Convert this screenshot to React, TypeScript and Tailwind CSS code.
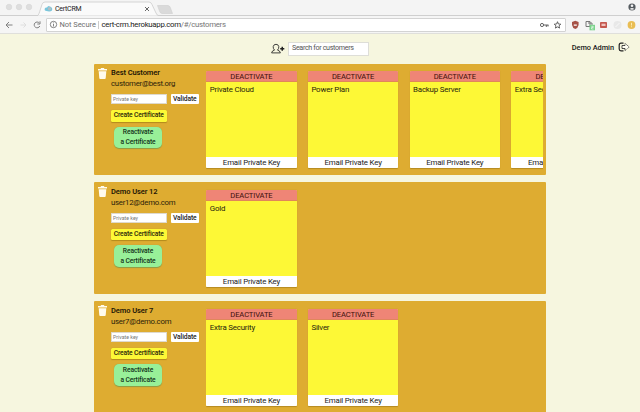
import React from "react";

type Customer = { name: string; email: string; certs: string[] };

const customers: Customer[] = [
  { name: "Best Customer", email: "customer@best.org", certs: ["Private Cloud", "Power Plan", "Backup Server", "Extra Security"] },
  { name: "Demo User 12", email: "user12@demo.com", certs: ["Gold"] },
  { name: "Demo User 7", email: "user7@demo.com", certs: ["Extra Security", "Silver"] },
];

function TabStrip() {
  return (
    <div className="relative h-[16px] shrink-0 bg-[#f4f4f4]">
      <svg className="block" width="640" height="16" viewBox="0 0 640 16">
        <path d="M0 15.5H640" stroke="#cfcfcf" />
        <path d="M37 16C39 15 39.5 12 40.5 9L42 4.5Q42.8 2 45 2H149Q151 2 152 4.5L156 13Q157 15.5 159 16Z" fill="#fafafa" stroke="#cccccc" strokeWidth=".8" />
        <path d="M157.500 5.500H168Q169.500 5.500 170.300 7.500L172.500 13.500H162Q160.500 13.500 159.700 11.500Z" fill="#dadada" stroke="#cecece" strokeWidth=".6" />
        <g fill="#dedede" stroke="#d2d2d2" strokeWidth=".5">
          <circle cx="9" cy="7" r="2.800" />
          <circle cx="19" cy="7" r="2.800" />
          <circle cx="29" cy="7" r="2.800" />
        </g>
        <path d="M46.500 11Q44 10.500 44.800 8.500Q45.500 7 47 7.500Q48 5 50 6.500Q53 7.500 52 10.500Q50 12 46.500 11Z" fill="#78c6dc" />
        <circle cx="49.500" cy="8.800" r="1.700" fill="#b3bec2" />
        <path d="M145 7L149 11M149 7L145 11" stroke="#555" strokeWidth=".9" />
        <circle cx="632" cy="7" r="3.600" fill="#555b60" />
        <circle cx="632" cy="5.700" r="1.300" fill="#f4f4f4" />
        <path d="M629.700 9Q632 7.200 634.300 9Q632 10.500 629.700 9Z" fill="#f4f4f4" />
      </svg>
      <span className="absolute left-[55px] top-[4px] text-[7px] leading-[10px] tracking-[-0.25px] text-[#222]">CertCRM</span>
    </div>
  );
}

function Toolbar() {
  return (
    <div className="flex h-[18px] shrink-0 items-center border-b border-[#dfdfdb] bg-[#f5f5f5]">
      <svg className="shrink-0" width="46" height="17" viewBox="0 0 46 17" fill="none" strokeWidth="1">
        <path d="M12.500 9H6M9 6L6 9L9 12" stroke="#808080" />
        <path d="M20.500 9H26M23.500 6.500L26 9L23.500 11.500" stroke="#dedede" />
        <path d="M39.300 7A2.900 2.900 0 1 0 39.800 10M40 5.300V8H37.300" stroke="#808080" />
      </svg>
      <div className="flex h-[14px] w-[520px] shrink-0 items-center rounded-[1px] border border-[#d3d3d3] bg-white">
        <svg className="ml-[2px] shrink-0" width="9" height="9" viewBox="0 0 9 9" fill="none" stroke="#666" strokeWidth=".8">
          <circle cx="4.500" cy="4.500" r="3.200" />
          <path d="M4.500 4V6.500M4.500 2.500V3.300" />
        </svg>
        <span className="ml-[1.5px] w-[38px] whitespace-nowrap text-[7.5px] leading-[12px] tracking-[-0.05px] text-[#707070]">Not Secure</span>
        <span className="h-[8px] w-px bg-[#ccc]" />
        <span className="ml-[3px] whitespace-nowrap text-[7.8px] leading-[12px] tracking-[-0.28px] text-[#777]">
          <span className="text-[#222]">cert-crm.herokuapp.com</span>/#/customers
        </span>
        <svg className="ml-auto shrink-0" width="28" height="12" viewBox="0 0 28 12" fill="none" stroke="#555" strokeWidth=".9">
          <circle cx="5" cy="6" r="1.600" />
          <path d="M6.600 6H11.500M9.300 6V8M11 6V7.500" />
          <path d="M20.500 2.700L21.400 5L23.800 5.200L22 6.800L22.600 9.100L20.500 7.900L18.400 9.100L19 6.800L17.200 5.200L19.600 5Z" />
        </svg>
      </div>
      <svg className="shrink-0" width="74" height="17" viewBox="566 0 74 17">
        <path d="M572 6L575.300 4.800L578.600 6V9Q578 12 575.300 13Q572.500 12 572 9Z" fill="#a65247" />
        <path d="M573.800 8.300H576.800V10H573.800Z" fill="#e8d5d1" />
        <path d="M586 5.500H590V10.500H586ZM588 7H592V11" fill="none" stroke="#777" strokeWidth="1" />
        <rect x="589.500" y="8.800" width="5.500" height="5.500" fill="#7bd38c" />
        <path d="M591.300 10.300H593.200V11.500H591.500V13H593.500" fill="none" stroke="#fff" strokeWidth=".6" />
        <rect x="600" y="6" width="7" height="6" rx=".8" fill="#c4584f" />
        <rect x="601.500" y="7.700" width="4" height="2.300" fill="#efc2bd" />
        <circle cx="617.500" cy="9" r="4" fill="#e8e8e8" />
        <path d="M615.500 11L619.500 7" stroke="#f9f9f9" />
        <circle cx="631.500" cy="9" r="3.900" fill="#e9bd54" />
        <path d="M631.500 6.800V9.500M631.500 10.300V11.200" stroke="#fff0bd" strokeWidth=".9" />
      </svg>
    </div>
  );
}

function Header() {
  return (
    <div className="flex h-[29.5px] shrink-0 items-center bg-[#f6f6df]">
      <svg className="ml-[271px] shrink-0" width="14" height="12" viewBox="0 0 14 12" fill="none" stroke="#222" strokeWidth=".85">
        <path d="M3.500 7.100Q2 5.600 2.200 3.600Q2.600 1.300 5 1.300Q7.400 1.300 7.800 3.600Q8 5.600 6.500 7.100Q9 7.600 9.400 9.900H.6Q1 7.600 3.500 7.100Z" />
        <path d="M9.200 5.800H13.300M11.250 3.800V7.800" strokeWidth="1.500" />
      </svg>
      <div className="ml-[3px] flex h-[14px] w-[81px] shrink-0 items-center whitespace-nowrap border border-[#deded8] bg-white pl-[3px] text-[7.2px] tracking-[-0.36px] text-[#555]">Search for customers</div>
      <span className="-mt-[2px] ml-auto whitespace-nowrap text-[7.4px] font-medium tracking-[-0.05px] text-[#191919]">Demo Admin</span>
      <svg className="-mt-[3px] ml-[4px] mr-[10px] shrink-0" width="12" height="10" viewBox="0 0 12 10" fill="none" stroke="#222" strokeWidth=".9">
        <path d="M5.500 1.200H3Q1.200 1.200 1.200 3V7Q1.200 8.800 3 8.800H5.500" strokeWidth="1.200" />
        <path d="M4 3.500H7V1.300L11.200 5L7 8.700V6.500H4Z" fill="#fffef2" stroke="none" />
        <path d="M7 3.500H4V6.500H7V8.500" strokeWidth=".8" />
        <path d="M7 3.500V1.300L11.200 5L7 8.700" strokeWidth=".8" strokeDasharray="1 .7" />
      </svg>
    </div>
  );
}

function Certificate({ title }: { title: string }) {
  return (
    <div className="flex h-[97px] w-[90.500px] shrink-0 flex-col overflow-hidden rounded-[1px] bg-[#fdf836] text-[7.900px] tracking-[-0.2px] text-[#26230c] shadow-[0_0.5px_1px_#b58a22]">
      <button className="h-[11px] shrink-0 border-b border-[#e0875a] bg-[#ef8576] text-center text-[7.600px] leading-[11px] tracking-[-0.13px] text-[#3d0f0b]">DEACTIVATE</button>
      <div className="flex-1 whitespace-nowrap pl-[3.500px] pt-[2px] leading-[11px]">{title}</div>
      <button className="h-[11px] shrink-0 whitespace-nowrap bg-white text-center leading-[11px] text-[#1c1c1c]">Email Private Key</button>
    </div>
  );
}

function CustomerRow({ customer }: { customer: Customer }) {
  return (
    <section className="flex h-[111.500px] shrink-0 rounded-[1px] bg-[#deac31] pr-[3.500px]">
      <svg className="ml-[4px] mt-[4px] shrink-0" width="9" height="11" viewBox="0 0 9 11" fill="#fffbed">
        <path d="M3 0H6L6.400 1H9V2.400H0V1H2.600ZM.7 3.200H8.300L7.700 10.200Q7.600 11 6.800 11H2.200Q1.400 11 1.300 10.200Z" />
      </svg>
      <div className="ml-[4px] mt-[3.500px] flex w-[95.500px] shrink-0 flex-col whitespace-nowrap">
        <span className="text-[7.500px] font-semibold leading-[11px] tracking-[-0.08px] text-[#1f1706]">{customer.name}</span>
        <span className="text-[7.800px] leading-[11px] tracking-[-0.25px] text-[#2c2209]">{customer.email}</span>
        <div className="mt-[5px] flex gap-[3.500px]">
          <div className="h-[10px] w-[56px] border border-[#ded9cd] bg-white pl-px text-[5.200px] leading-[8px] text-[#777]">Private key</div>
          <button className="h-[10px] w-[28.500px] rounded-[1px] bg-white text-[6.700px] font-medium leading-[10px] tracking-[-0.1px] text-[#222]">Validate</button>
        </div>
        <button className="mt-[6px] h-[11.500px] w-[55.500px] rounded-[1.500px] bg-[#fdf836] text-[6.700px] font-medium leading-[11px] tracking-[-0.15px] text-[#2c270a] shadow-[0_0.5px_1px_#b38a1c]">Create Certificate</button>
        <button className="ml-[3px] mt-[5px] h-[21.500px] w-[48px] rounded-[5px] bg-[#98f098] text-[6.700px] font-medium leading-[10.500px] tracking-[-0.12px] text-[#14351a] shadow-[0_0.5px_1px_#8c9c45]">Reactivate<br />a Certificate</button>
      </div>
      <div className="-ml-[0.300px] flex min-w-0 flex-1 gap-[11.200px] overflow-hidden pt-[7.500px]">
        {customer.certs.map((title) => <Certificate key={title} title={title} />)}
      </div>
    </section>
  );
}

export default function App() {
  return (
    <div className="flex h-[412px] w-[640px] flex-col overflow-hidden bg-[#f6f6df] font-['Roboto',sans-serif]">
      <TabStrip />
      <Toolbar />
      <Header />
      <main className="ml-[94px] flex w-[452.400px] flex-col gap-[7.400px]">
        {customers.map((customer) => <CustomerRow key={customer.name} customer={customer} />)}
      </main>
    </div>
  );
}
